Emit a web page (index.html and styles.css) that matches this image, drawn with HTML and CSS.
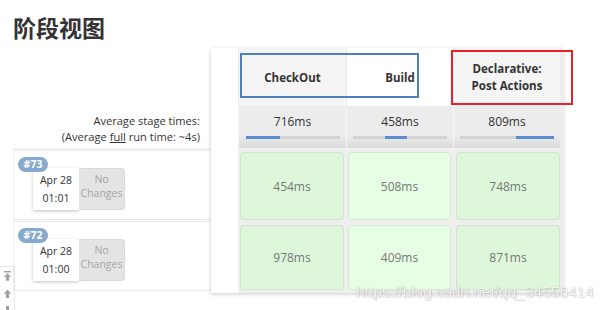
FILE: index.html
```html
<!DOCTYPE html>
<html>
<head>
<meta charset="utf-8">
<link rel="stylesheet" href="styles.css">
</head>
<body>
<h1 class="title">阶段视图</h1>
<div class="stage-view">
  <div class="labels">
    <div class="labels-head"></div>
    <div class="avg-label">Average stage times:<br>(Average <u>full</u> run time: ~4s)</div>
    <div class="label-rows">
      <div class="run-row">
        <div class="run-card">
          <span class="badge">#73</span>
          <div class="date"><span>Apr 28</span><span>01:01</span></div>
          <div class="changes">No<br>Changes</div>
        </div>
      </div>
      <div class="run-row">
        <div class="run-card">
          <span class="badge">#72</span>
          <div class="date"><span>Apr 28</span><span>01:00</span></div>
          <div class="changes">No<br>Changes</div>
        </div>
      </div>
    </div>
  </div>
  <div class="panel">
    <div class="gutter"></div>
    <div class="head gray">CheckOut</div>
    <div class="head">Build</div>
    <div class="head gray">Declarative:<br>Post Actions</div>
    <div class="edge"></div>

    <div class="avg"><span>716ms</span><div class="track"><div class="fill" style="margin-left:0;width:34px"></div></div></div>
    <div class="avg"><span>458ms</span><div class="track"><div class="fill" style="margin-left:32px;width:22px"></div></div></div>
    <div class="avg"><span>809ms</span><div class="track"><div class="fill" style="margin-left:56px;width:38px"></div></div></div>

    <div class="cell r1"><div class="box">454ms</div></div>
    <div class="cell r1 light"><div class="box">508ms</div></div>
    <div class="cell r1 last"><div class="box">748ms</div></div>

    <div class="cell r2"><div class="box">978ms</div></div>
    <div class="cell r2 light"><div class="box">409ms</div></div>
    <div class="cell r2 last"><div class="box">871ms</div></div>
  </div>
  <div class="mark blue"></div>
  <div class="mark red"></div>
</div>
<div class="scroller">
  <svg width="11" height="13" viewBox="0 0 11 13"><rect x="1" y="0" width="9" height="2" fill="#a0a0a0"/><path d="M5.5 3 L10.5 8 H7.5 V13 H3.5 V8 H0.5 Z" fill="#a0a0a0"/></svg>
  <svg width="11" height="13" viewBox="0 0 11 13"><path d="M5.5 1 L10.5 6.5 H7.5 V13 H3.5 V6.5 H0.5 Z" fill="#a0a0a0"/></svg>
  <svg width="11" height="13" viewBox="0 0 11 13"><path d="M3.5 0 H7.5 V6.5 H10.5 L5.5 12 L0.5 6.5 H3.5 Z" fill="#a0a0a0"/></svg>
</div>
<div class="watermark">https://blog.csdn.net/qq_34556414</div>
</body>
</html>
```
FILE: styles.css
```css
html, body {
  margin: 0;
  padding: 0;
  background: #fff;
  width: 609px;
  height: 310px;
  overflow: hidden;
  font-family: "Open Sans", "Noto Sans", sans-serif;
  color: #333;
}
.title {
  margin: 0;
  padding: 13px 0 0 13px;
  height: 35px;
  box-sizing: border-box;
  font-family: "Noto Sans CJK SC", sans-serif;
  font-size: 23px;
  line-height: 28px;
  font-weight: 700;
  color: #333;
}
.stage-view {
  position: relative;
  display: flex;
  margin-top: 13px;
  margin-left: 13px;
}
.labels {
  width: 198px;
  display: flex;
  flex-direction: column;
}
.labels-head { height: 58px; }
.avg-label {
  height: 42px;
  box-sizing: border-box;
  text-align: right;
  padding: 7px 11px 0 0;
  font-size: 11.1px;
  line-height: 16px;
  color: #333;
}
.label-rows {
  box-shadow: inset 0 3px 3px -2px rgba(0,0,0,0.12);
  padding-top: 2px;
}
.run-row {
  height: 70px;
  border: 1px solid #ececec;
  border-right: none;
  box-sizing: border-box;
  padding: 17px 0 0 19px;
}
.run-row + .run-row {
  margin-top: 1px;
  padding-top: 17px;
}
.run-card {
  position: relative;
  display: flex;
  height: 42px;
}
.badge {
  position: absolute;
  left: -15px;
  top: -11px;
  width: 30px;
  height: 15px;
  border-radius: 8px;
  background: #86a9d0;
  color: #fff;
  font-size: 10.5px;
  font-weight: 700;
  line-height: 15px;
  text-align: center;
  z-index: 2;
}
.date {
  width: 46px;
  height: 42px;
  box-sizing: border-box;
  background: #fff;
  box-shadow: 0 1px 3px rgba(0,0,0,0.25);
  display: flex;
  flex-direction: column;
  align-items: center;
  justify-content: space-around;
  padding: 3px 0;
  font-size: 10.5px;
  color: #333;
}
.changes {
  width: 46px;
  height: 42px;
  box-sizing: border-box;
  background: #e4e4e4;
  border: 1px solid #d9d9d9;
  border-left: none;
  border-radius: 0 4px 4px 0;
  text-align: center;
  font-size: 10.5px;
  line-height: 14px;
  padding-top: 3px;
  color: #a5a5a5;
}
.panel {
  width: 352px;
  display: grid;
  grid-template-columns: 27px 108px 107px 107px 3px;
  grid-template-rows: 58px 42px 74px 71px;
  background: #efefef;
  box-shadow: 0 1px 4px rgba(0,0,0,0.22);
}
.gutter {
  grid-row: 1 / 5;
  background: #fff;
}
.edge {
  grid-row: 1 / 5;
  grid-column: 5;
  background: #eeeeee;
}
.head {
  background: #fff;
  display: flex;
  align-items: center;
  justify-content: center;
  text-align: center;
  font-size: 11.5px;
  line-height: 17px;
  font-weight: 700;
  color: #333;
  border-left: 1px solid #eaeaea;
}
.head.gray { background: #f5f5f5; }
.avg {
  background: linear-gradient(#ececec 70%, #d9d9d9);
  border-left: 1px solid #f6f6f6;
  display: flex;
  flex-direction: column;
  align-items: center;
  padding-top: 8px;
  box-sizing: border-box;
  font-size: 12px;
  line-height: 16px;
  color: #333;
}
.track {
  margin-top: 6px;
  width: 94px;
  height: 3px;
  background: #d2d2d2;
  display: flex;
}
.fill {
  height: 3px;
  background: #5a8ed0;
}
.cell {
  padding: 4px 2px 2px 2px;
  box-sizing: border-box;
}
.cell.r2 { padding: 3px 2px 3px 2px; }
.cell.last { padding-left: 3px; padding-right: 0; }
.box {
  height: 100%;
  box-sizing: border-box;
  border: 1px solid #cfe5cb;
  border-radius: 4px;
  background: #def7db;
  display: flex;
  align-items: center;
  justify-content: center;
  font-size: 12px;
  color: #777;
}
.cell.light .box { background: #e6fee3; border-color: #d2ead0; }
.mark {
  position: absolute;
  box-sizing: border-box;
  border: 2px solid;
  pointer-events: none;
}
.mark.blue {
  border-color: #4e7fbe;
  left: 227px;
  top: 5px;
  width: 179px;
  height: 45px;
}
.mark.red {
  border-color: #e4212c;
  left: 438px;
  top: 2px;
  width: 122px;
  height: 55px;
}
.scroller {
  position: absolute;
  left: 0;
  top: 266px;
  width: 15px;
  height: 50px;
  border-right: 1px solid #e4e4e4;
  border-top: 1px solid #e4e4e4;
  display: flex;
  flex-direction: column;
  align-items: center;
  gap: 8px;
  padding-top: 4px;
  box-sizing: border-box;
}
.watermark {
  position: absolute;
  left: 356px;
  top: 283px;
  font-family: "Liberation Sans", sans-serif;
  font-size: 15.5px;
  color: rgba(255,255,255,0.9);
  text-shadow: 0 0 1px rgba(0,0,0,0.3), 1px 1px 1px rgba(0,0,0,0.12);
  white-space: nowrap;
}
```
